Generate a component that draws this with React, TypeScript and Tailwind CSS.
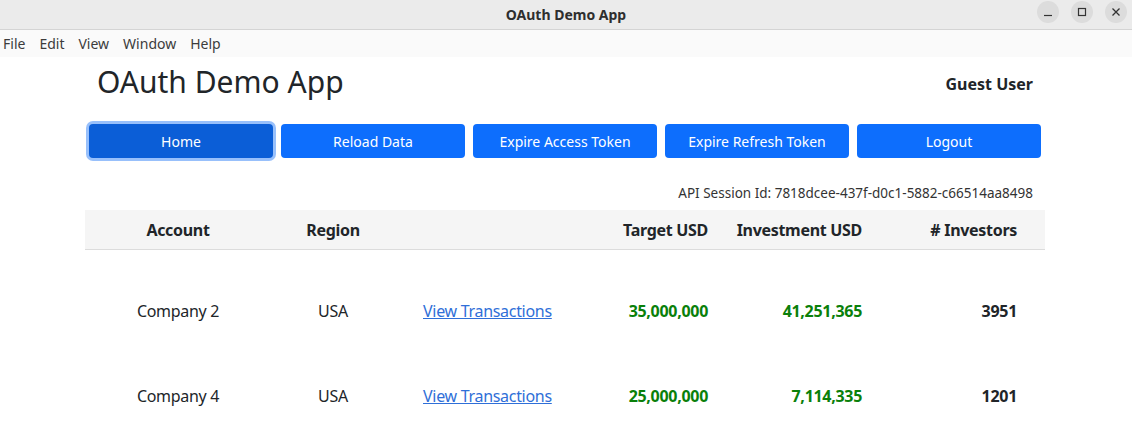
import React from "react";

const rows = [
  { account: "Company 2", region: "USA", target: "35,000,000", invest: "41,251,365", investors: "3951" },
  { account: "Company 4", region: "USA", target: "25,000,000", invest: "7,114,335", investors: "1201" },
];

const buttons = ["Home", "Reload Data", "Expire Access Token", "Expire Refresh Token", "Logout"];

const cols = "grid grid-cols-[186px_124px_186px_155px_154px_155px]";

export default function App() {
  return (
    <div className="h-[424px] w-[1132px] overflow-hidden bg-white text-[#212529]" style={{ fontFamily: '"Noto Sans", "Open Sans", sans-serif' }}>
      {/* window title bar */}
      <div className="relative flex h-[30px] items-center justify-center border-b border-[#d4d4d4] bg-[#ebebeb]">
        <span className="text-[14px] font-bold text-[#2e2e2e]">OAuth Demo App</span>
        <div className="absolute right-[5px] top-[1px] flex gap-[12px]">
          <div className="flex h-[22px] w-[22px] items-center justify-center rounded-full bg-[#dcdcdc]">
            <svg width="10" height="10" viewBox="0 0 10 10"><path d="M1 8.5h8" stroke="#333" strokeWidth="1.2" /></svg>
          </div>
          <div className="flex h-[22px] w-[22px] items-center justify-center rounded-full bg-[#dcdcdc]">
            <svg width="10" height="10" viewBox="0 0 10 10"><rect x="1.5" y="1.5" width="7" height="7" fill="none" stroke="#333" strokeWidth="1.2" /></svg>
          </div>
          <div className="flex h-[22px] w-[22px] items-center justify-center rounded-full bg-[#dcdcdc]">
            <svg width="10" height="10" viewBox="0 0 10 10"><path d="M1.5 1.5l7 7M8.5 1.5l-7 7" stroke="#333" strokeWidth="1.3" /></svg>
          </div>
        </div>
      </div>

      {/* menu bar */}
      <div className="flex h-[27px] items-center gap-[14px] bg-[#fafafa] pl-[3px] text-[14px] text-[#3c3c3c]">
        <span>File</span>
        <span>Edit</span>
        <span>View</span>
        <span>Window</span>
        <span>Help</span>
      </div>

      <div className="ml-[85px] w-[960px]">
        <div className="flex items-center justify-between px-[12px] pt-[3px]">
          <h1 className="text-[30px] leading-[44px] text-[#212529]">OAuth Demo App</h1>
          <span className="mt-[4px] text-[16px] font-bold">Guest User</span>
        </div>

        <div className="mt-[20px] flex gap-[8px] px-[4px]">
          {buttons.map((b, i) => (
            <button
              key={b}
              className={
                i === 0
                  ? "h-[34px] w-[184px] rounded-[4px] bg-[#0b5ed7] text-[14px] text-white ring-[3px] ring-[#98c0fb]"
                  : "h-[34px] w-[184px] rounded-[4px] bg-[#0d6efd] text-[14px] text-white"
              }
            >
              {b}
            </button>
          ))}
        </div>

        <div className="mt-[25px] px-[12px] text-right text-[13.5px] text-[#333]">
          API Session Id: 7818dcee-437f-d0c1-5882-c66514aa8498
        </div>

        <div className={`${cols} mt-[7px] h-[40px] items-center whitespace-nowrap border-b border-[#dcdcdc] bg-[#f5f5f5] text-[16px] font-bold tracking-[-0.3px]`}>
          <div className="text-center">Account</div>
          <div className="text-center">Region</div>
          <div></div>
          <div className="pr-[28px] text-right">Target USD</div>
          <div className="pr-[28px] text-right">Investment USD</div>
          <div className="pr-[28px] text-right"># Investors</div>
        </div>

        <div className="mt-[18px]">
          {rows.map((r) => (
            <div key={r.account} className={`${cols} h-[85px] items-center whitespace-nowrap text-[16px] tracking-[-0.3px]`}>
              <div className="text-center">{r.account}</div>
              <div className="text-center">{r.region}</div>
              <div className="pl-[28px]">
                <a className="text-[#2f6fd8] underline">View Transactions</a>
              </div>
              <div className="pr-[28px] text-right font-bold text-[#0a800a]">{r.target}</div>
              <div className="pr-[28px] text-right font-bold text-[#0a800a]">{r.invest}</div>
              <div className="pr-[28px] text-right font-bold">{r.investors}</div>
            </div>
          ))}
        </div>
      </div>
    </div>
  );
}
